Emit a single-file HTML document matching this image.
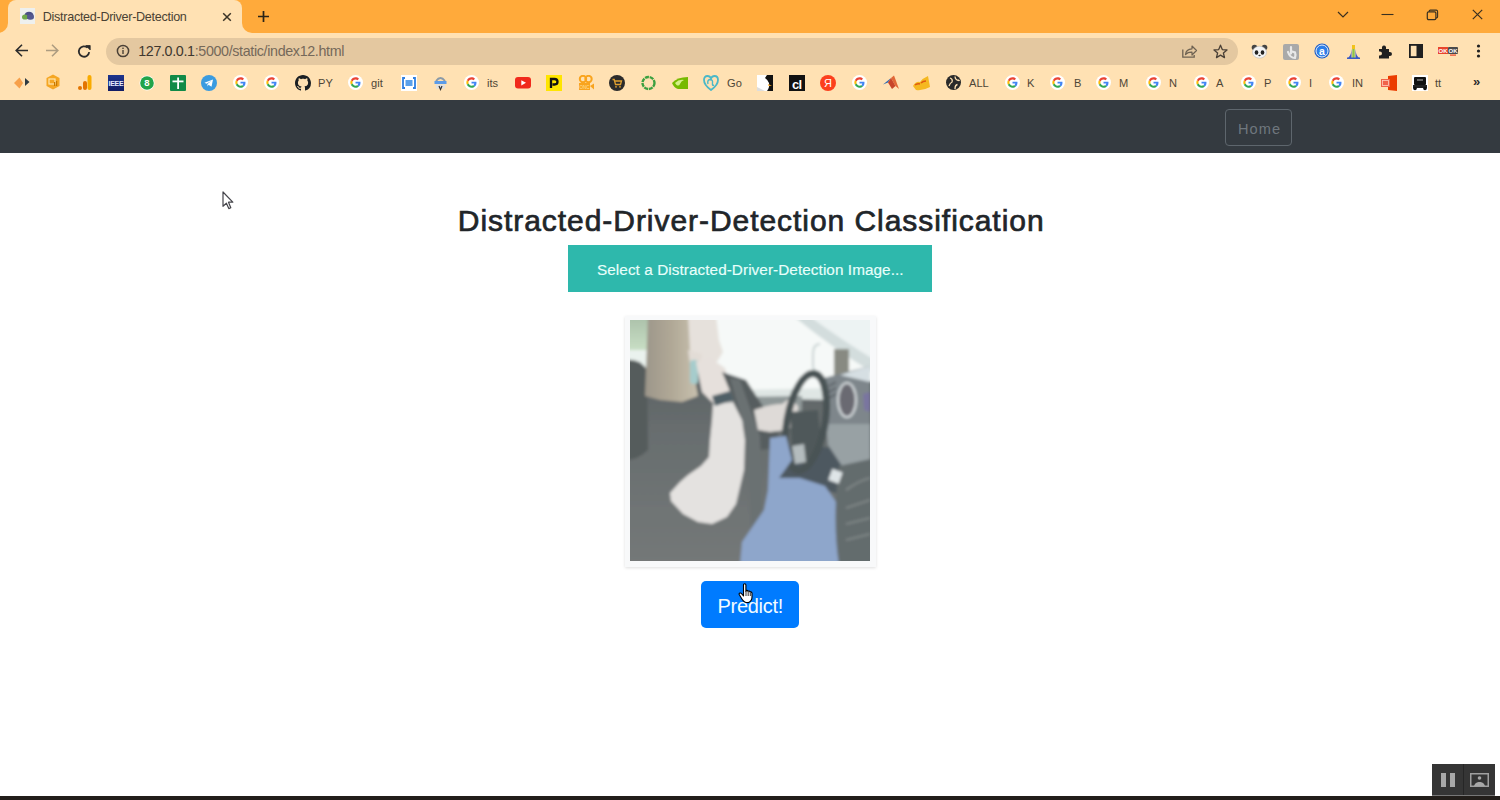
<!DOCTYPE html>
<html><head><meta charset="utf-8">
<style>
*{margin:0;padding:0;box-sizing:border-box}
html,body{width:1500px;height:800px;overflow:hidden;background:#fff;font-family:"Liberation Sans",sans-serif;position:relative}
.abs{position:absolute}
.t{position:absolute;white-space:nowrap;line-height:1.15}
.bt{position:absolute;top:76.5px;font-size:11.1px;color:#4E4536;white-space:nowrap;line-height:1.15}
</style></head><body>
<svg width="0" height="0" style="position:absolute"><defs><symbol id="g" viewBox="0 0 48 48"><circle cx="24" cy="24" r="24" fill="#fff"/><g transform="translate(7.5 7.5) scale(0.69)"><path fill="#EA4335" d="M24 9.5c3.54 0 6.71 1.22 9.21 3.6l6.85-6.85C35.9 2.38 30.47 0 24 0 14.62 0 6.51 5.38 2.56 13.22l7.98 6.19C12.43 13.72 17.74 9.5 24 9.5z"/><path fill="#4285F4" d="M46.98 24.55c0-1.570-.15-3.09-.38-4.55H24v9.02h12.94c-.58 2.96-2.26 5.48-4.78 7.18l7.73 6c4.51-4.18 7.090-10.36 7.090-17.65z"/><path fill="#FBBC05" d="M10.53 28.59c-.48-1.45-.76-2.99-.76-4.59s.27-3.14.76-4.59l-7.98-6.19C.92 16.46 0 20.12 0 24c0 3.88.92 7.54 2.56 10.78l7.97-6.19z"/><path fill="#34A853" d="M24 48c6.48 0 11.93-2.13 15.89-5.81l-7.73-6c-2.15 1.45-4.92 2.3-8.16 2.3-6.26 0-11.57-4.22-13.47-9.91l-7.98 6.19C6.51 42.62 14.62 48 24 48z"/></g></symbol><linearGradient id="ieee" x1="0" y1="0" x2="0" y2="1"><stop offset="0" stop-color="#2040A0" stop-opacity="0.5"/><stop offset="1" stop-color="#0A1050" stop-opacity="0.5"/></linearGradient></defs></svg>
<div class="abs" style="left:0;top:0;width:1500px;height:33px;background:#FFAA3B"></div>
<div class="abs" style="left:0;top:23px;width:252px;height:10px;background:#FFE1B3"></div>
<div class="abs" style="left:-2px;top:13px;width:10px;height:20px;background:#FFAA3B;border-radius:0 0 10px 0"></div>
<div class="abs" style="left:242px;top:13px;width:20px;height:20px;background:#FFAA3B;border-radius:0 0 0 10px"></div>
<div class="abs" style="left:8px;top:0;width:234px;height:34px;background:#FFE1B3;border-radius:8px 8px 0 0"></div>
<div class="abs" style="left:20px;top:8px;width:15px;height:16px;background:#EEF0EE"></div>
<svg class="abs" style="left:21px;top:11px" width="13" height="9" viewBox="0 0 13 9"><ellipse cx="8" cy="4.5" rx="4.5" ry="3.8" fill="#4A4F86"/><ellipse cx="4" cy="6" rx="3" ry="2.6" fill="#6FA84A"/><ellipse cx="9.5" cy="6" rx="3.5" ry="2.8" fill="#55598F"/></svg>
<div class="t" style="left:42.8px;top:9.6px;font-size:12.6px;letter-spacing:-0.3px;color:#4A4134">Distracted-Driver-Detection</div>
<svg class="abs" style="left:222px;top:12px" width="10" height="10" viewBox="0 0 10 10"><path d="M1.2 1.2L8.8 8.8M8.8 1.2L1.2 8.8" stroke="#3A3326" stroke-width="1.5"/></svg>
<svg class="abs" style="left:257px;top:10px" width="13" height="13" viewBox="0 0 13 13"><path d="M6.5 1V12M1 6.5H12" stroke="#2A2418" stroke-width="1.7"/></svg>
<svg class="abs" style="left:1337px;top:10px" width="12" height="9" viewBox="0 0 12 9"><path d="M1 2L6 7L11 2" stroke="#3A3020" stroke-width="1.2" fill="none"/></svg>
<svg class="abs" style="left:1381px;top:13px" width="13" height="3" viewBox="0 0 13 3"><path d="M0.5 1.5H12.5" stroke="#3A3020" stroke-width="1.1"/></svg>
<svg class="abs" style="left:1426px;top:9px" width="13" height="12" viewBox="0 0 13 12"><rect x="1.3" y="2.8" width="8.6" height="7.8" rx="1.3" stroke="#3A3020" stroke-width="1.2" fill="none"/><path d="M3.2 2.8V2.2Q3.2 1.1 4.3 1.1H10.3Q11.6 1.1 11.6 2.4V7.8Q11.6 8.9 10.5 8.9H9.9" stroke="#3A3020" stroke-width="1.1" fill="none"/></svg>
<svg class="abs" style="left:1472px;top:9px" width="11" height="11" viewBox="0 0 11 11"><path d="M0.8 0.8L10.2 10.2M10.2 0.8L0.8 10.2" stroke="#3A3020" stroke-width="1.2"/></svg>
<div class="abs" style="left:0;top:33px;width:1500px;height:67px;background:#FFE1B3"></div>
<div class="abs" style="left:106px;top:37.5px;width:1132px;height:27px;background:#E4C8A0;border-radius:13.5px"></div>
<svg class="abs" style="left:14px;top:43px" width="15" height="15" viewBox="0 0 15 15"><path d="M14 7.5H2.5M8 1.8L2.2 7.5L8 13.2" stroke="#2B2B2B" stroke-width="1.6" fill="none"/></svg>
<svg class="abs" style="left:45px;top:43px" width="15" height="15" viewBox="0 0 15 15"><path d="M1 7.5H12.5M7 1.8L12.8 7.5L7 13.2" stroke="#AD9C80" stroke-width="1.6" fill="none"/></svg>
<svg class="abs" style="left:77px;top:44px" width="15" height="15" viewBox="0 0 15 15"><path d="M12.2 8.2A5.2 5.2 0 1 1 10.6 3.7" stroke="#2B2B2B" stroke-width="1.8" fill="none"/><path d="M8.8 1.5H13.2V5.9Z" fill="#2B2B2B" stroke="#2B2B2B" stroke-width="0.8"/></svg>
<svg class="abs" style="left:116px;top:44px" width="14" height="14" viewBox="0 0 14 14"><circle cx="7" cy="7" r="5.6" stroke="#4A4036" stroke-width="1.5" fill="none"/><rect x="6.3" y="6" width="1.4" height="4" fill="#4A4036"/><rect x="6.3" y="3.6" width="1.4" height="1.4" fill="#4A4036"/></svg>
<div class="t" style="left:138.2px;top:42.8px;font-size:14.3px;letter-spacing:-0.35px;color:#3E372E">127.0.0.1<span style="color:#75695A">:5000/static/index12.html</span></div>
<svg class="abs" style="left:1181px;top:44px" width="17" height="15" viewBox="0 0 17 15"><path d="M1.8 5.5V13.2H13.2V11" stroke="#6E6252" stroke-width="1.3" fill="none"/><path d="M4.5 10.5Q5 5 11 4.8V2L15.5 6.5L11 11V8.2Q7 8 4.5 10.5Z" stroke="#6E6252" stroke-width="1.2" fill="none" stroke-linejoin="round"/></svg>
<svg class="abs" style="left:1213px;top:44px" width="15" height="15" viewBox="0 0 15 15"><path d="M7.5 1.2L9.3 5.6L14 6L10.4 9L11.5 13.6L7.5 11.1L3.5 13.6L4.6 9L1 6L5.7 5.6Z" stroke="#4A4036" stroke-width="1.3" fill="none" stroke-linejoin="round"/></svg>
<svg class="abs" style="left:1251px;top:44px" width="17" height="15" viewBox="0 0 17 15"><circle cx="3.5" cy="3.5" r="2.8" fill="#444"/><circle cx="13.5" cy="3.5" r="2.8" fill="#444"/><ellipse cx="8.5" cy="8.2" rx="7" ry="6" fill="#F4F4F4" stroke="#bbb" stroke-width="0.6"/><ellipse cx="5.5" cy="8.5" rx="1.8" ry="2.2" fill="#222"/><ellipse cx="11.5" cy="8.5" rx="1.8" ry="2.2" fill="#222"/><ellipse cx="8.5" cy="11.5" rx="1.2" ry="0.8" fill="#333"/></svg>
<svg class="abs" style="left:1283px;top:44px" width="16" height="16" viewBox="0 0 16 16"><rect x="0" y="0" width="16" height="16" rx="2" fill="#A9A9A9"/><path d="M8 3V9.5M5 8Q7 14 12 14Q13 11 12 8.5L9 7.5" stroke="#E8E8E8" stroke-width="2.2" fill="none" stroke-linecap="round"/></svg>
<svg class="abs" style="left:1314px;top:43px" width="16" height="16" viewBox="0 0 16 16"><circle cx="8" cy="8" r="7.6" fill="#1E5FC8"/><circle cx="8" cy="8" r="6" fill="#2D7EE8" stroke="#fff" stroke-width="0.9"/><text x="8" y="11.6" font-size="10.5" font-family="Liberation Sans" text-anchor="middle" fill="#fff" font-weight="bold">a</text></svg>
<svg class="abs" style="left:1346px;top:45px" width="15" height="14" viewBox="0 0 15 14"><path d="M1 13.5Q5 12 5.5 4V13.5Z" fill="#3B5BC4"/><path d="M14 13.5Q10 12 9.5 4V13.5Z" fill="#3B5BC4"/><rect x="6.3" y="1" width="2.4" height="12.5" fill="#8BC34A"/><rect x="6" y="0" width="3" height="4" fill="#F2C21B"/><rect x="1" y="12.5" width="13" height="1.5" fill="#3B5BC4"/></svg>
<svg class="abs" style="left:1377px;top:44px" width="15" height="15" viewBox="0 0 15 15"><path d="M2 5H5Q4.5 1.5 7 1.5Q9.5 1.5 9 5H12V8Q15 7.5 15 10Q15 12.5 12 12V14.5H2V11.5Q5 12 5 9.5Q5 7 2 7.5Z" fill="#202020"/></svg>
<svg class="abs" style="left:1409px;top:44px" width="14" height="14" viewBox="0 0 14 14"><rect x="0.9" y="0.9" width="12.2" height="12.2" stroke="#202020" stroke-width="1.8" fill="none"/><rect x="7.5" y="1" width="5.5" height="12" fill="#202020"/></svg>
<svg class="abs" style="left:1438px;top:46px" width="21" height="10" viewBox="0 0 21 10"><rect x="0" y="1" width="10" height="7" fill="#E8452C"/><rect x="10" y="1" width="10" height="7" fill="#4A4A4A" rx="1"/><text x="5" y="7" font-size="6" font-family="Liberation Sans" font-weight="bold" text-anchor="middle" fill="#fff">OK</text><text x="15" y="7" font-size="6" font-family="Liberation Sans" font-weight="bold" text-anchor="middle" fill="#fff">OK</text><rect x="12" y="8.5" width="6" height="1.2" fill="#E8452C"/></svg>
<svg class="abs" style="left:1476px;top:44px" width="5" height="14" viewBox="0 0 5 14"><circle cx="2.5" cy="2" r="1.6" fill="#202020"/><circle cx="2.5" cy="7" r="1.6" fill="#202020"/><circle cx="2.5" cy="12" r="1.6" fill="#202020"/></svg>
<svg class="abs" style="left:14px;top:76px" width="16" height="13" viewBox="0 0 16 13"><path d="M0 7L5.5 1.5L9 7L5.5 12.5Z" fill="#F7A04A"/><path d="M11 2L15.5 6L11 10Z" fill="#2E3A42"/></svg>
<svg class="abs" style="left:46px;top:74px" width="14" height="16" viewBox="0 0 14 16"><path d="M7 0.5L13.5 4V12L7 15.5L0.5 12V4Z" fill="#F5A623"/><rect x="3" y="5" width="6" height="5" stroke="#FFE6B0" stroke-width="1.2" fill="none"/><rect x="8" y="8" width="1.2" height="4" fill="#C77800"/><rect x="10" y="7" width="1.2" height="5" fill="#C77800"/></svg>
<svg class="abs" style="left:78px;top:75px" width="14" height="15" viewBox="0 0 14 15"><rect x="9.5" y="0" width="4" height="15" rx="2" fill="#F9AB00"/><rect x="5" y="6" width="4" height="9" rx="2" fill="#E37400"/><circle cx="2" cy="13" r="2" fill="#E37400"/></svg>
<svg class="abs" style="left:108px;top:75px" width="16" height="16" viewBox="0 0 16 16"><rect width="16" height="16" fill="#1B2A7A"/><rect x="0" y="0" width="16" height="16" fill="url(#ieee)"/><text x="8" y="11" font-size="7" font-family="Liberation Sans" font-weight="bold" text-anchor="middle" fill="#E8ECFF" letter-spacing="-0.3">IEEE</text></svg>
<svg class="abs" style="left:139px;top:75px" width="16" height="16" viewBox="0 0 16 16"><circle cx="8" cy="8" r="7.5" fill="#fff"/><circle cx="8" cy="8" r="6.8" fill="#21A44A"/><text x="8" y="11.4" font-size="9.5" font-family="Liberation Sans" font-weight="bold" text-anchor="middle" fill="#fff">8</text></svg>
<svg class="abs" style="left:170px;top:75px" width="16" height="16" viewBox="0 0 16 16"><rect width="16" height="16" rx="1" fill="#108A48"/><rect x="7.2" y="2.5" width="1.8" height="11.5" fill="#fff"/><rect x="2.5" y="5.5" width="11" height="1.8" fill="#fff"/></svg>
<svg class="abs" style="left:201px;top:75px" width="16" height="16" viewBox="0 0 16 16"><circle cx="8" cy="8" r="8" fill="#3A9BE0"/><path d="M3.5 7.8L12 4.5L10.5 11.8L7.5 9.8L6.5 11.5V9L10.5 5.8L5.5 8.7Z" fill="#fff"/></svg>
<svg class="abs" style="left:233px;top:75px" width="15" height="15"><use href="#g"/></svg>
<svg class="abs" style="left:264px;top:75px" width="15" height="15"><use href="#g"/></svg>
<svg class="abs" style="left:295px;top:75px" width="16" height="16" viewBox="0 0 16 16"><path fill="#1B1F23" d="M8 0C3.58 0 0 3.58 0 8c0 3.54 2.29 6.53 5.47 7.59.4.07.55-.17.55-.38 0-.19-.01-.82-.01-1.49-2.01.37-2.53-.49-2.69-.94-.09-.23-.48-.94-.82-1.13-.28-.15-.68-.52-.01-.53.63-.01 1.08.58 1.23.82.72 1.21 1.87.87 2.33.66.07-.52.28-.87.51-1.07-1.78-.2-3.64-.89-3.64-3.95 0-.87.31-1.59.82-2.15-.08-.2-.36-1.02.08-2.12 0 0 .67-.21 2.2.82.64-.18 1.32-.27 2-.27.68 0 1.36.09 2 .27 1.53-1.04 2.2-.82 2.2-.82.44 1.1.16 1.92.08 2.12.51.56.82 1.27.82 2.15 0 3.07-1.87 3.75-3.65 3.95.29.25.54.73.54 1.48 0 1.07-.01 1.93-.01 2.2 0 .21.15.46.55.38A8.013 8.013 0 0016 8c0-4.42-3.58-8-8-8z"/></svg>
<div class="bt" style="left:318px">PY</div>
<svg class="abs" style="left:348px;top:75px" width="15" height="15"><use href="#g"/></svg>
<div class="bt" style="left:371px">git</div>
<svg class="abs" style="left:401px;top:75px" width="16" height="16" viewBox="0 0 16 16"><rect width="16" height="16" fill="#fff"/><path d="M4 3H2V13H4M12 3H14V13H12" stroke="#2F7FE0" stroke-width="1.8" fill="none"/><rect x="4.5" y="5" width="7" height="6" fill="#5AA0EA"/></svg>
<svg class="abs" style="left:433px;top:76px" width="15" height="15" viewBox="0 0 15 15"><path d="M3 5Q7.5 -1 12 5" stroke="#8a9aa8" stroke-width="1.8" fill="none"/><rect x="1.5" y="5" width="12" height="3" fill="#5B9BE8"/><rect x="3" y="8.5" width="9" height="4" fill="#e0e0e0"/><path d="M6 10L7.5 13.5L9 10" stroke="#333" stroke-width="1.2" fill="none"/></svg>
<svg class="abs" style="left:464px;top:75px" width="15" height="15"><use href="#g"/></svg>
<div class="bt" style="left:487px">its</div>
<svg class="abs" style="left:515px;top:77px" width="16" height="12" viewBox="0 0 16 12"><rect width="16" height="11.5" rx="3" fill="#F0291C"/><path d="M6.3 3.2L11 5.8L6.3 8.4Z" fill="#fff"/></svg>
<svg class="abs" style="left:546px;top:75px" width="16" height="16" viewBox="0 0 16 16"><rect width="16" height="16" fill="#FFE500"/><path d="M5 13V4H8.5Q11.5 4 11.5 6.8Q11.5 9.5 8.5 9.5H6.5" stroke="#111" stroke-width="2.3" fill="none"/></svg>
<svg class="abs" style="left:578px;top:75px" width="16" height="16" viewBox="0 0 16 16"><circle cx="5" cy="4" r="3.2" stroke="#F9A41E" stroke-width="2" fill="none"/><circle cx="10.5" cy="4" r="3.2" stroke="#F9A41E" stroke-width="2" fill="none"/><rect x="1" y="8" width="11" height="7" fill="#F9A41E"/><path d="M12 11L16 8.5V14.5Z" fill="#F9A41E"/><text x="6.5" y="13.6" font-size="4.5" font-family="Liberation Sans" text-anchor="middle" fill="#FFE0A0">ONC</text></svg>
<svg class="abs" style="left:609px;top:75px" width="16" height="16" viewBox="0 0 16 16"><circle cx="8" cy="8" r="8" fill="#2B2B2B"/><path d="M3.5 4.5H5.2L6.5 9.5H11.5L12.5 6H6" stroke="#E0A030" stroke-width="1.3" fill="none"/><circle cx="7" cy="11.8" r="0.9" fill="#E0A030"/><circle cx="11" cy="11.8" r="0.9" fill="#E0A030"/></svg>
<svg class="abs" style="left:641px;top:75px" width="15" height="16" viewBox="0 0 15 16"><circle cx="7.5" cy="8" r="6" stroke="#3BA040" stroke-width="2.4" fill="none" stroke-dasharray="4 0.8"/></svg>
<svg class="abs" style="left:672px;top:76px" width="16" height="14" viewBox="0 0 16 14"><path d="M0 7Q5 1 16 1V13H6Q2 12 0 7Z" fill="#76B900"/><path d="M3 7Q7 3 12 4Q9 5 8 8Q7 10.5 4.5 9Z" fill="#D4F08A"/></svg>
<svg class="abs" style="left:703px;top:75px" width="16" height="16" viewBox="0 0 16 16"><path d="M8 15Q1 10 1 5Q1 1 4.5 1Q7 1 8 3.5Q9 1 11.5 1Q15 1 15 5Q15 10 8 15Z" fill="none" stroke="#4AB8C8" stroke-width="1.8"/><path d="M5 9Q4 5 7 4.5Q10 4.5 9.5 8Q9 11 11 10" stroke="#4AB8C8" stroke-width="1.4" fill="none"/></svg>
<div class="bt" style="left:727px">Go</div>
<svg class="abs" style="left:757px;top:75px" width="16" height="16" viewBox="0 0 16 16"><rect width="16" height="16" fill="#fff"/><path d="M10 0H16V16H10Q13 12 12 8Q11 5 8 3Z" fill="#111"/><path d="M11 9L15 11L11.5 11Z" fill="#F5A623"/><path d="M0 12Q4 14 8 16H0Z" fill="#ddd"/></svg>
<svg class="abs" style="left:789px;top:75px" width="16" height="16" viewBox="0 0 16 16"><rect width="16" height="16" fill="#111"/><text x="7.8" y="13.5" font-size="13" font-family="Liberation Sans" font-weight="bold" text-anchor="middle" fill="#fff" letter-spacing="-0.5">cl</text></svg>
<svg class="abs" style="left:820px;top:75px" width="16" height="16" viewBox="0 0 16 16"><circle cx="8" cy="8" r="8" fill="#FC3F1D"/><text x="8" y="12.3" font-size="11" font-family="Liberation Sans" text-anchor="middle" fill="#fff">Я</text></svg>
<svg class="abs" style="left:852px;top:75px" width="15" height="15"><use href="#g"/></svg>
<svg class="abs" style="left:883px;top:75px" width="16" height="16" viewBox="0 0 16 16"><path d="M0 9.5L5 7.5L8 3Z" fill="#2E69B3"/><path d="M8 3L11 0.5L16 14L12.5 11Z" fill="#E16737"/><path d="M5 7.5L8 3L12.5 11L9 14Z" fill="#C8442A"/></svg>
<svg class="abs" style="left:913px;top:75px" width="17" height="16" viewBox="0 0 17 16"><path d="M0 11Q3 6 7 7Q10 3 15 1L17 12Q10 16 3 15Z" fill="#F5B820"/><path d="M2 10Q5 8 7 9M8 8Q10 6 13 6" stroke="#E05A10" stroke-width="1.5" fill="none"/></svg>
<svg class="abs" style="left:946px;top:75px" width="15" height="15" viewBox="0 0 15 15"><circle cx="7.5" cy="7.5" r="7.5" fill="#2A2A2A"/><path d="M4 3Q7 4 6 7Q4 8 3 11M9 1.5Q9 4 11 5Q13 5 13.5 6M9 14Q9 10 11.5 9.5" stroke="#FFE1B3" stroke-width="1.3" fill="none"/></svg>
<div class="bt" style="left:969px">ALL</div>
<svg class="abs" style="left:1005px;top:75px" width="15" height="15"><use href="#g"/></svg>
<div class="bt" style="left:1027px">K</div>
<svg class="abs" style="left:1050px;top:75px" width="15" height="15"><use href="#g"/></svg>
<div class="bt" style="left:1074px">B</div>
<svg class="abs" style="left:1096px;top:75px" width="15" height="15"><use href="#g"/></svg>
<div class="bt" style="left:1119px">M</div>
<svg class="abs" style="left:1146px;top:75px" width="15" height="15"><use href="#g"/></svg>
<div class="bt" style="left:1169px">N</div>
<svg class="abs" style="left:1194px;top:75px" width="15" height="15"><use href="#g"/></svg>
<div class="bt" style="left:1216px">A</div>
<svg class="abs" style="left:1241px;top:75px" width="15" height="15"><use href="#g"/></svg>
<div class="bt" style="left:1264px">P</div>
<svg class="abs" style="left:1286px;top:75px" width="15" height="15"><use href="#g"/></svg>
<div class="bt" style="left:1309px">I</div>
<svg class="abs" style="left:1329px;top:75px" width="15" height="15"><use href="#g"/></svg>
<div class="bt" style="left:1352px">IN</div>
<svg class="abs" style="left:1380px;top:75px" width="18" height="16" viewBox="0 0 18 16"><path d="M8 1L17 0V16L8 15Z" fill="#EB3C00"/><rect x="1" y="4" width="9" height="8" fill="#F0624A"/><rect x="2.5" y="5.5" width="6" height="5" fill="none" stroke="#FFD0C0" stroke-width="0.8"/></svg>
<svg class="abs" style="left:1412px;top:75px" width="16" height="16" viewBox="0 0 16 16"><rect width="16" height="16" fill="#fff"/><rect x="2" y="2" width="12" height="8" rx="1" fill="#111"/><rect x="5" y="4" width="6" height="2" fill="#666"/><rect x="1" y="10" width="14" height="3" fill="#222"/><circle cx="3" cy="13.5" r="1.8" fill="#111"/><circle cx="13" cy="13.5" r="1.8" fill="#111"/></svg>
<div class="bt" style="left:1435px">tt</div>
<div class="t" style="left:1473px;top:75px;font-size:13px;color:#2B2B2B;font-weight:bold">&raquo;</div>
<div class="abs" style="left:0;top:100px;width:1500px;height:53px;background:#343A40"></div>
<div class="abs" style="left:1225px;top:108.5px;width:67px;height:37px;border:1px solid #5E666D;border-radius:4px"></div>
<div class="t" style="left:1238px;top:121.2px;font-size:14.6px;letter-spacing:1.05px;color:#6F777E">Home</div>
<div class="t" style="left:457.8px;top:204px;font-size:30px;letter-spacing:0.95px;-webkit-text-stroke:0.7px #212529;color:#212529">Distracted-Driver-Detection Classification</div>
<div class="abs" style="left:568px;top:245px;width:364px;height:47px;background:#2EB8AC"></div>
<div class="t" style="left:597px;top:260.6px;font-size:15.3px;letter-spacing:0.07px;-webkit-text-stroke:0.15px #E8FFFB;color:#E8FFFB">Select a Distracted-Driver-Detection Image...</div>
<div class="abs" style="left:625px;top:316px;width:251px;height:251px;background:#F8F9FA;box-shadow:0 1px 3px rgba(0,0,0,0.13)"></div>
<div class="abs" id="photo" style="left:630px;top:320px;width:240px;height:241px;background:#8a9090;overflow:hidden"><svg width="240" height="241" viewBox="0 0 240 241" style="position:absolute;left:0;top:0"><defs><filter id="bl" x="-5%" y="-5%" width="110%" height="110%"><feGaussianBlur stdDeviation="1.4"/></filter><linearGradient id="sh" x1="0" y1="0" x2="0" y2="1"><stop offset="0" stop-color="#50575a"/><stop offset="0.45" stop-color="#676d6e"/><stop offset="1" stop-color="#747878"/></linearGradient></defs>
<g filter="url(#bl)">
<rect x="-5" y="-5" width="250" height="251" fill="url(#sh)"/>
<linearGradient id="gw" x1="0" y1="0" x2="0" y2="1"><stop offset="0" stop-color="#a9bfa8"/><stop offset="1" stop-color="#c8dec4"/></linearGradient><rect x="-5" y="-5" width="26" height="35" fill="url(#gw)"/>
<rect x="-5" y="30" width="26" height="18" fill="#eaf2ee"/>
<path d="M-5 40Q10 38 17 50L18 130Q8 140 -5 140Z" fill="#555c5c"/>
<path d="M60 -5H245V60L205 72L120 80L100 62L84 48L70 44Z" fill="#f6f9f8"/>
<path d="M162 -5H178Q212 20 245 40V54Q205 30 162 -5Z" fill="#d3dddd"/><path d="M178 -5H245V40Q212 20 178 -5Z" fill="#edf3f3"/>
<rect x="204" y="29" width="15" height="30" fill="#888a82"/>
<path d="M190 24Q183 24 183 34V46Q183 52 190 52" stroke="#c8d2d2" stroke-width="2" fill="none"/>
<path d="M100 70L205 68L240 58V78L200 80L110 78Z" fill="#dfe6e4"/>
<path d="M112 77L172 76V102L112 104Z" fill="#8f9898"/>
<linearGradient id="hr" x1="0" y1="0" x2="1" y2="0"><stop offset="0" stop-color="#9c968a"/><stop offset="0.5" stop-color="#b0a896"/><stop offset="1" stop-color="#c8c0ae"/></linearGradient><path d="M18 -5H64L65 28L62 44L68 76L52 82L30 80L15 76Z" fill="url(#hr)"/>
<path d="M58 -5H86L89 20L93 32L87 42L70 42L60 30Z" fill="#e6e1dc"/>
<path d="M58 30L72 34L70 46L60 44Z" fill="#e2dcd6"/><rect x="60" y="40" width="8" height="24" rx="3" fill="#a6cccc"/>
<path d="M66 42L80 38L95 48L101 68L104 80L86 86L72 72Z" fill="#e6e0dc"/>
<path d="M92 52L116 60L145 105L152 128L128 130L112 100Z" fill="#565d5f"/>
<path d="M100 58L110 60L130 116L134 241H122L118 120Z" fill="#6a7172"/>
<path d="M124 90Q140 84 152 84L160 78L168 86L168 104L156 110L140 112L128 110Z" fill="#dedad7"/>
<path d="M83 84L103 82L112 100L115 120L114 150L106 184L97 197L82 204L68 202L53 194L41 181L40 173L50 162L58 155L71 146L79 137L80 120L82 100Z" fill="#e4e2e0"/>
<path d="M82 76L100 71L104 80L85 86Z" fill="#4f5f66"/>
<path d="M150 125L214 128L216 176L195 170L168 158L150 162Z" fill="#4e5860"/>
<path d="M194 58L240 46V108L196 106Z" fill="#7e868b"/><path d="M196 104L240 104V150L212 146L198 125Z" fill="#98a1a4"/><path d="M210 55L240 46V62Z" fill="#d6dfe3"/>
<ellipse cx="217" cy="80" rx="9" ry="17" fill="#6a6a72" stroke="#d8dee0" stroke-width="2"/><path d="M199 66L206 62M199 72L206 68M199 78L206 74" stroke="#565c62" stroke-width="1.6"/>
<path d="M233 74L240 72V92L234 90Z" fill="#7a74a0"/>
<path d="M160 92L188 90L192 130L180 146L162 140Z" fill="#50585a"/>
<ellipse cx="176" cy="102" rx="19" ry="49" transform="rotate(10 176 102)" fill="none" stroke="#485254" stroke-width="7"/>
<path d="M162 126L174 124L176 142L165 144Z" fill="#b4bcbe"/>
<path d="M140 118L156 116L162 140L149 158L170 158L195 166L206 182L209 211L209 245H110L112 222L134 190L138 170Z" fill="#8ea6cb"/>
<path d="M209 146L245 138V245H209Q202 200 209 146Z" fill="#646c6d"/>
<path d="M216 170Q230 160 240 158M216 188L240 180M216 204L240 198M216 220L240 214" stroke="#848c8c" stroke-width="1.6" fill="none"/>
<rect x="200" y="150" width="11" height="12" fill="#dfe5e7" transform="rotate(20 205 156)"/>
</g>
</svg>
</div>
<div class="abs" style="left:701px;top:581px;width:98px;height:47px;background:#007BFF;border-radius:5px"></div>
<div class="t" style="left:717.5px;top:594.5px;font-size:20px;letter-spacing:-0.3px;color:#F2FBFF">Predict!</div>
<svg class="abs" style="left:738px;top:583px" width="17" height="21" viewBox="0 0 17 21"><path d="M5.5 2Q5.5 0.8 6.7 0.8Q7.9 0.8 7.9 2V8.5L8.2 7.5Q9.5 7 10 8.2Q11.5 7.5 12 9Q13.5 8.5 14 10.2V14Q14 18 10.5 19.5H8Q5.5 19 3 14.5L1.2 11.5Q0.8 10.3 2 10Q3 9.8 4 11.2L5.5 13Z" fill="#fff" stroke="#000" stroke-width="1.1" stroke-linejoin="round"/><path d="M8 8.5V13M10.2 8.5V13M12.3 9.5V13" stroke="#000" stroke-width="0.8"/></svg>
<svg class="abs" style="left:222px;top:191px" width="13" height="20" viewBox="0 0 13 20"><path d="M1 1V15.3L4.4 12.2L6.8 17.6L8.8 16.7L6.5 11.2H10.8Z" fill="#fff" stroke="#45454B" stroke-width="1.2" stroke-linejoin="round"/></svg>
<div class="abs" style="left:0;top:796px;width:1500px;height:4px;background:#221E1A"></div>
<div class="abs" style="left:1432px;top:764px;width:63px;height:32px;background:#353535;border-bottom:1px solid #777"></div>
<div class="abs" style="left:1463px;top:764px;width:1px;height:31px;background:#262626"></div>
<div class="abs" style="left:1440.5px;top:773px;width:5.5px;height:14px;background:#A8A8A8"></div>
<div class="abs" style="left:1449.5px;top:773px;width:5.5px;height:14px;background:#A8A8A8"></div>
<svg class="abs" style="left:1470px;top:773px" width="19" height="14" viewBox="0 0 19 14"><rect x="0.75" y="0.75" width="17.5" height="12.5" stroke="#A0A0A0" stroke-width="1.5" fill="none"/><circle cx="9.5" cy="5" r="1.8" fill="#A8A8A8"/><path d="M4 13Q5 9.5 8.5 9H10.5Q14 9.5 15 13Z" fill="#A8A8A8"/></svg>
</body></html>
